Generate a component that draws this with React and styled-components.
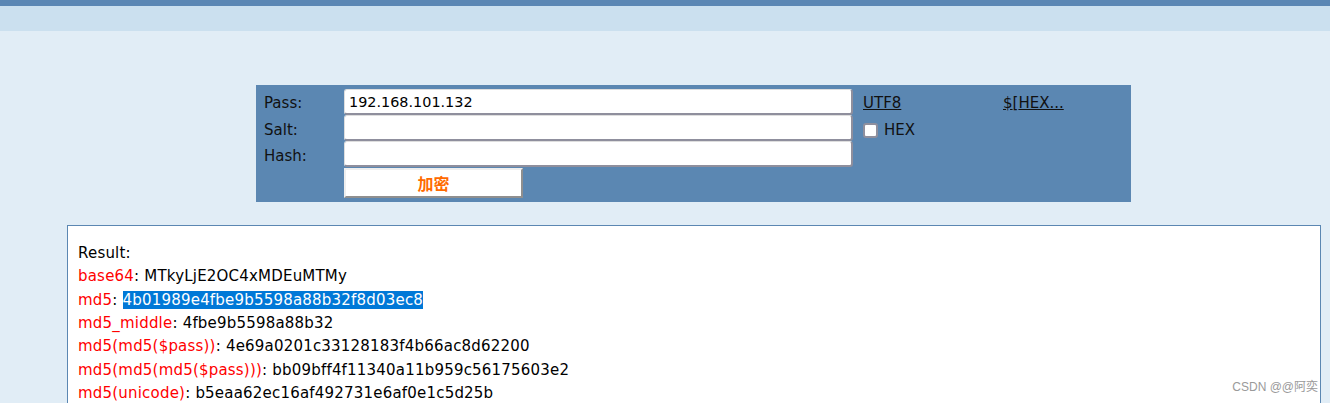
import React from "react";
import styled, { createGlobalStyle } from "styled-components";

const GlobalStyle = createGlobalStyle`
  html, body {
    margin: 0;
    padding: 0;
    overflow: hidden;
    background: #e1edf6;
    font-family: "DejaVu Sans", Verdana, sans-serif;
  }
`;

const Page = styled.div`
  position: relative;
  height: 403px;
`;

const TopBar = styled.div`
  height: 6px;
  background: #5b87b4;
`;

const SubBar = styled.div`
  height: 25px;
  background: #cbe0ef;
`;

const Panel = styled.form`
  margin: 54px 0 0 256px;
  width: 875px;
  height: 117px;
  box-sizing: border-box;
  padding: 3px 0 0 8px;
  background: #5b87b2;
  display: grid;
  grid-template-columns: 80px 509px 140px auto;
  grid-template-rows: 27px 26px 26px 30px;
  align-items: start;
  font-size: 15px;
  color: #111;
`;

const Label = styled.label`
  display: flex;
  align-items: center;
  height: 26px;
  padding-top: 4px;
  box-sizing: border-box;
`;

const Field = styled.input`
  box-sizing: border-box;
  width: 509px;
  height: 26px;
  margin: ${(p) => (p.first ? "1px 0 0" : "0")};
  padding: 0 4px;
  border: 1px solid #dedede;
  border-right: 2px solid #8f8f9d;
  border-bottom: 2px solid #8f8f9d;
  border-radius: 3px;
  background: #fff;
  font-family: "DejaVu Sans", Verdana, sans-serif;
  font-size: 14.4px;
  color: #000;
  outline: none;
`;

const Side = styled.div`
  display: flex;
  align-items: center;
  height: 26px;
  box-sizing: border-box;
  padding-left: 10px;
  padding-top: 4px;
`;

const Link = styled.a`
  color: #111;
  text-decoration: underline;
  cursor: pointer;
`;

const Check = styled.span`
  box-sizing: border-box;
  width: 15px;
  height: 15px;
  border: 2px solid #8f8f9d;
  border-radius: 3px;
  background: #fff;
  margin-right: 6px;
`;

const Button = styled.button`
  box-sizing: border-box;
  width: 179px;
  height: 30px;
  margin-top: 1px;
  padding: 0;
  background: #fff;
  border: 2px solid;
  border-color: #eeeeee #8f8f8f #8f8f8f #eeeeee;
  color: #ff6a00;
  font-family: "Noto Sans CJK SC", sans-serif;
  font-weight: 700;
  font-size: 16px;
  cursor: pointer;
`;

const Result = styled.div`
  margin: 23px 0 0 67px;
  width: 1254px;
  height: 300px;
  box-sizing: border-box;
  border: 1px solid #5b87b2;
  background: #fff;
  padding: 16px 10px;
  font-size: 15px;
  line-height: 23.33px;
  letter-spacing: 0.2px;
  color: #000;
`;

const Line = styled.div`
  white-space: nowrap;
`;

const Key = styled.span`
  color: #ff0000;
`;

const Value = styled.span`
  background: ${(p) => (p.selected ? "#0078d7" : "transparent")};
  color: ${(p) => (p.selected ? "#fff" : "#000")};
`;

const Watermark = styled.div`
  position: absolute;
  right: 12px;
  bottom: 9px;
  font-family: "Liberation Sans", "Noto Sans CJK SC", sans-serif;
  font-size: 12px;
  color: #9a9a9a;
`;

const rows = [
  ["base64", "MTkyLjE2OC4xMDEuMTMy"],
  ["md5", "4b01989e4fbe9b5598a88b32f8d03ec8", true],
  ["md5_middle", "4fbe9b5598a88b32"],
  ["md5(md5($pass))", "4e69a0201c33128183f4b66ac8d62200"],
  ["md5(md5(md5($pass)))", "bb09bff4f11340a11b959c56175603e2"],
  ["md5(unicode)", "b5eaa62ec16af492731e6af0e1c5d25b"],
];

export default function App() {
  return (
    <Page>
      <GlobalStyle />
      <TopBar />
      <SubBar />
      <Panel onSubmit={(e) => e.preventDefault()}>
        <Label>Pass:</Label>
        <Field first defaultValue="192.168.101.132" />
        <Side>
          <Link>UTF8</Link>
        </Side>
        <Side>
          <Link>$</Link>[<Link>HEX...</Link>
        </Side>

        <Label>Salt:</Label>
        <Field />
        <Side>
          <Check />
          HEX
        </Side>
        <div />

        <Label>Hash:</Label>
        <Field />
        <div />
        <div />

        <div />
        <Button type="button">加密</Button>
      </Panel>

      <Result>
        <Line>Result:</Line>
        {rows.map(([k, v, sel]) => (
          <Line key={k}>
            <Key>{k}</Key>: <Value selected={sel}>{v}</Value>
          </Line>
        ))}
      </Result>

      <Watermark>CSDN @@阿奕</Watermark>
    </Page>
  );
}
